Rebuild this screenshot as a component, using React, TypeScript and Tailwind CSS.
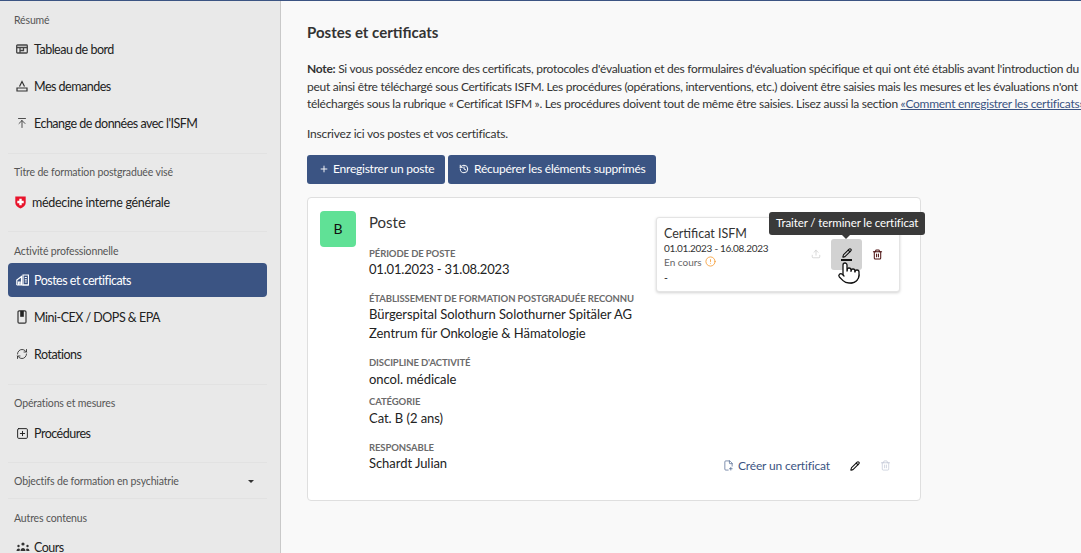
import React from "react";
import { Plus, History, SquarePlus, RefreshCw, ArrowUpToLine, Trash2, Upload, FilePlus2, Pencil, CircleAlert, Pointer } from "lucide-react";

const Label = ({ children, className = "" }: { children: React.ReactNode; className?: string }) => (
  <div className={`flex h-[24px] items-center px-[6px] pt-[2px] text-[10.500px] tracking-[-0.15px] text-[#555555] ${className}`}>{children}</div>
);

const Item = ({ icon, children, active }: { icon: React.ReactNode; children: React.ReactNode; active?: boolean }) => (
  <div className={`mb-[3px] flex h-[34px] items-center rounded-[4px] px-[8px] text-[12.500px] tracking-[-0.5px] ${active ? "bg-[#3b5483] text-white" : "text-[#222222]"}`}>
    <span className="flex w-[18px] shrink-0 items-center">{icon}</span>
    <span className="pt-[2px]">{children}</span>
  </div>
);

const Divider = () => <div className="h-px bg-[#e2e2e2]" />;

const Board = () => (
  <svg width="12" height="12" viewBox="0 0 12 12" fill="none" stroke="#444" strokeWidth="1.300">
    <rect x="0.700" y="2" width="10.600" height="8" rx="0.800" />
    <path d="M0.700 4.500h10.600M4 4.500V10M7.500 4.500v3H4" />
  </svg>
);

const Tray = () => (
  <svg width="12" height="12" viewBox="0 0 12 12" fill="none" stroke="#333" strokeWidth="1.200">
    <path d="M3.500 6.500 6 1.500l2.500 5" />
    <path d="M1 8h2.500h5H11v3H1z" />
  </svg>
);

const Shield = () => (
  <svg width="11" height="13" viewBox="0 0 11 13">
    <path d="M0.300 0.500h10.400v6.500c0 2.600-2.500 4.300-5.200 5.600C2.800 11.300.3 9.600.3 7z" fill="#e8132b" />
    <path d="M4.300 2.800h2.400v2h2v2.400h-2v2H4.300v-2h-2V4.800h2z" fill="#fff" />
  </svg>
);

const Hospital = () => (
  <svg width="13" height="12" viewBox="0 0 13 12" fill="none" stroke="#fff" strokeWidth="1.200">
    <path d="M0.800 11V6L5.500 2.500V11M0.800 11h11.700M2.500 11V8h1.500v3" />
    <path d="M7 1h5.500v10H7zM8.800 3.500h2M8.800 5.800h2M8.800 8h2" />
  </svg>
);

const Tablet = () => (
  <svg width="12" height="14" viewBox="0 0 12 14" fill="none">
    <rect x="2" y="0.800" width="8" height="12.400" rx="1.200" stroke="#333" strokeWidth="1.200" />
    <rect x="4.200" y="0.800" width="3.600" height="6" fill="#222" />
  </svg>
);

const Group = () => (
  <svg width="14" height="10" viewBox="0 0 14 10" fill="#333">
    <circle cx="7" cy="2" r="1.600" />
    <circle cx="2.500" cy="4" r="1.200" />
    <circle cx="11.500" cy="4" r="1.200" />
    <path d="M4.500 9c0-4 5-4 5 0zM0.500 9c0-3 3-3 3.400-2L3.600 9zM13.500 9c0-3-3-3-3.400-2l.3 2z" />
  </svg>
);

const Field = ({ label, children, className = "" }: { label: string; children: React.ReactNode; className?: string }) => (
  <div className={className}>
    <div className="whitespace-nowrap text-[9.500px] font-bold uppercase leading-[13px] tracking-[-0.1px] text-[#6b6b6b]">{label}</div>
    <div className="whitespace-nowrap text-[13px] leading-[19px] tracking-[-0.05px] text-[#222222]">{children}</div>
  </div>
);

export default function App() {
  return (
    <div className="flex h-[553px] w-full flex-col overflow-hidden bg-[#f9f9f9] font-['Lato','Liberation_Sans',sans-serif]">
      <div className="h-px shrink-0 bg-[#3b5483]" />
      <div className="flex min-h-0 flex-1">
        <aside className="w-[281px] shrink-0 overflow-hidden border-r border-[#c9c9c9] bg-[#e9e9e9] pl-[8px] pr-[13px] pt-[7px]">
          <Label>Résumé</Label>
          <Item icon={<Board />}>Tableau de bord</Item>
          <Item icon={<Tray />}>Mes demandes</Item>
          <Item icon={<ArrowUpToLine size={12} strokeWidth={1.700} color="#333" />}>Echange de données avec l'ISFM</Item>
          <div className="h-[10px]" />
          <Divider />
          <Label className="mt-[6px]">Titre de formation postgraduée visé</Label>
          <div className="mt-px flex h-[34px] items-center px-[7px] text-[12.500px] tracking-[-0.3px] text-[#222222]">
            <span className="flex w-[17px]"><Shield /></span>
            <span className="pt-[2px]">médecine interne générale</span>
          </div>
          <div className="h-[12px]" />
          <Divider />
          <Label className="mt-[7px]">Activité professionnelle</Label>
          <Item active icon={<Hospital />}>Postes et certificats</Item>
          <Item icon={<Tablet />}>Mini-CEX / DOPS &amp; EPA</Item>
          <Item icon={<RefreshCw size={12} strokeWidth={1.800} color="#333" />}>Rotations</Item>
          <div className="h-[10px]" />
          <Divider />
          <Label className="mt-[6px]">Opérations et mesures</Label>
          <div className="h-px" />
          <Item icon={<SquarePlus size={13} strokeWidth={1.800} color="#222" />}>Procédures</Item>
          <div className="h-[9px]" />
          <Divider />
          <div className="flex h-[35px] items-center justify-between pl-[6px] pr-[13px] pt-[2px] text-[10.500px] tracking-[-0.15px] text-[#555555]">
            <span>Objectifs de formation en psychiatrie</span>
            <span className="h-0 w-0 border-x-[3px] border-t-[3px] border-x-transparent border-t-[#333333]" />
          </div>
          <Divider />
          <Label className="mt-[7px]">Autres contenus</Label>
          <Item icon={<Group />}>Cours</Item>
        </aside>
        <main className="min-w-0 flex-1 overflow-hidden pl-[26px] pt-[21px]">
          <h1 className="text-[15px] font-bold leading-[20px] text-[#333333]">Postes et certificats</h1>
          <div className="mt-[18px] w-[1000px] whitespace-nowrap text-[12px] leading-[17.500px] tracking-[-0.28px] text-[#333333]">
            <p><b>Note:</b> Si vous possédez encore des certificats, protocoles d'évaluation et des formulaires d'évaluation spécifique et qui ont été établis avant l'introduction du</p>
            <p>peut ainsi être téléchargé sous Certificats ISFM. Les procédures (opérations, interventions, etc.) doivent être saisies mais les mesures et les évaluations n'ont</p>
            <p>téléchargés sous la rubrique « Certificat ISFM ». Les procédures doivent tout de même être saisies. Lisez aussi la section <span className="text-[#3b5483] underline">«Comment enregistrer les certificats»</span></p>
          </div>
          <p className="mt-[12px] text-[12px] leading-[17px] tracking-[-0.23px] text-[#333333]">Inscrivez ici vos postes et vos certificats.</p>
          <div className="mt-[13px] flex gap-[3px]">
            <button className="flex h-[29px] w-[138px] items-center gap-[4px] rounded-[3px] bg-[#3b5483] pl-[12px] text-[12px] tracking-[-0.23px] text-white">
              <Plus size={10} strokeWidth={2.200} />Enregistrer un poste
            </button>
            <button className="flex h-[29px] w-[208px] items-center gap-[5px] rounded-[3px] bg-[#3b5483] pl-[11px] text-[12px] tracking-[-0.23px] text-white">
              <History size={10} strokeWidth={2.400} />Récupérer les éléments supprimés
            </button>
          </div>
          <section className="relative mt-[13px] flex h-[304px] w-[614px] rounded-[4px] border border-[#dfdfdf] bg-white pl-[12px] pr-[20px] pt-[13px]">
            <div className="flex h-[36px] w-[36px] shrink-0 items-center justify-center rounded-[4px] bg-[#60e196] text-[14px] text-[#111111]">B</div>
            <div className="ml-[13px] w-[280px] shrink-0">
              <div className="text-[15px] leading-[22px] text-[#333333]">Poste</div>
              <Field label="Période de poste" className="mt-[14px]"><span className="tracking-[-0.18px]">01.01.2023 - 31.08.2023</span></Field>
              <Field label="Établissement de formation postgraduée reconnu" className="mt-[13px]">
                <span className="block">Bürgerspital Solothurn Solothurner Spitäler AG</span>
                <span className="block">Zentrum für Onkologie &amp; Hämatologie</span>
              </Field>
              <Field label="Discipline d'activité" className="mt-[13px]"><span className="block pt-px">oncol. médicale</span></Field>
              <Field label="Catégorie" className="mt-[6px]"><span className="block pt-px">Cat. B (2 ans)</span></Field>
              <Field label="Responsable" className="mt-[13px]">Schardt Julian</Field>
            </div>
            <div className="flex flex-1 flex-col items-end justify-between pb-[25px] pt-[6px]">
              <div className="relative flex h-[75px] w-[244px] rounded-[3px] border border-[#e4e4e4] bg-white pl-[7px] pt-[8px] shadow-[0_1px_3px_rgba(0,0,0,0.18)]">
                <div className="w-[143px]">
                  <div className="text-[12.500px] leading-[15px] text-[#333333]">Certificat ISFM</div>
                  <div className="text-[10px] leading-[14px] tracking-[-0.3px] text-[#333333]">01.01.2023 - 16.08.2023</div>
                  <div className="flex items-center gap-[3px] text-[10px] leading-[14px] text-[#666666]">
                    En cours <CircleAlert size={11} strokeWidth={1.800} color="#f59a30" />
                  </div>
                  <div className="mt-[2px] text-[10.500px] leading-[14px] text-[#333333]">-</div>
                </div>
                <div className="mt-[13px] flex h-[31px] items-center">
                  <span className="flex w-[24px] pl-[4px]"><Upload size={10} strokeWidth={1.500} color="#c4c4c4" /></span>
                  <span className="flex h-[31px] w-[31px] items-center justify-center rounded-[3px] bg-[#d2d2d2]">
                    <span className="flex flex-col items-center">
                      <Pencil size={10} strokeWidth={2.600} color="#111" />
                      <span className="mt-[1px] h-[2px] w-[11px] bg-[#111111]" />
                    </span>
                  </span>
                  <span className="flex w-[31px] justify-center"><Trash2 size={11} strokeWidth={2.200} color="#4a0e0e" /></span>
                </div>
                <div className="absolute left-[112px] top-[-6px] z-10 flex h-[23px] items-center whitespace-nowrap rounded-[3px] bg-[#3a3a3a] px-[7px] text-[11.500px] tracking-[-0.1px] text-white">
                  Traiter / terminer le certificat
                  <span className="absolute bottom-[-4px] left-[73px] h-0 w-0 border-x-[4px] border-t-[4px] border-x-transparent border-t-[#3a3a3a]" />
                </div>
                <Pointer size={24} strokeWidth={1.300} color="#111" fill="#fff" className="absolute left-[180px] top-[43px] z-10" />
              </div>
              <div className="flex items-center pr-[9px] text-[12px] tracking-[-0.15px] text-[#3b5483]">
                <FilePlus2 size={11} strokeWidth={1.400} className="mr-[4px]" />
                <span className="mr-[20px]">Créer un certificat</span>
                <Pencil size={10} strokeWidth={2.600} color="#111" className="mr-[20px]" />
                <Trash2 size={11} strokeWidth={1.400} color="#b9bfd0" />
              </div>
            </div>
          </section>
        </main>
      </div>
    </div>
  );
}
